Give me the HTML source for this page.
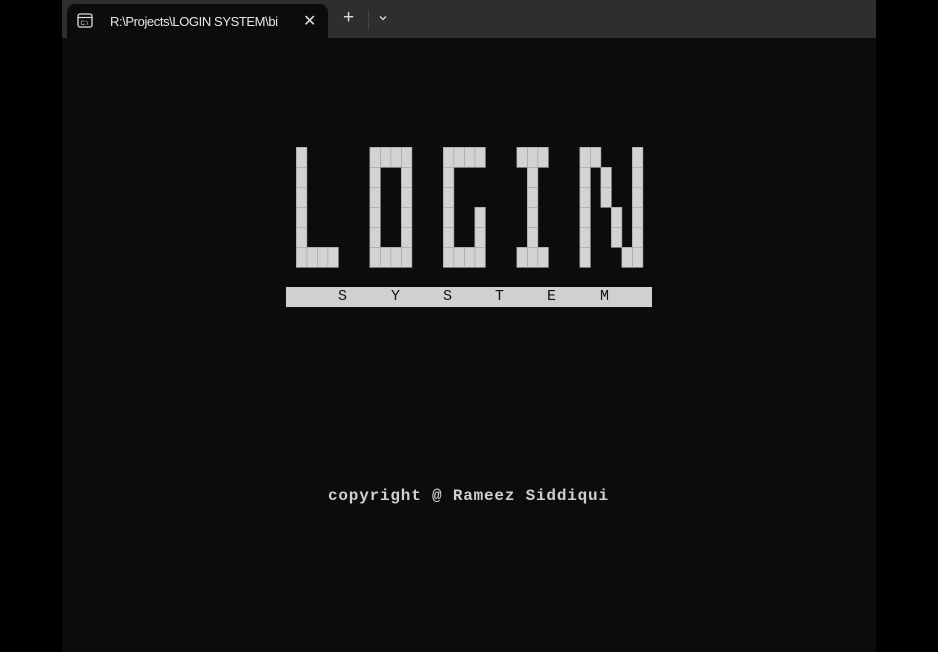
<!DOCTYPE html>
<html><head><meta charset="utf-8"><style>
body{margin:0;width:938px;height:652px;background:#000;position:relative;overflow:hidden;font-family:"Liberation Sans",sans-serif}
.win{position:absolute;left:62px;top:0;width:814px;height:652px;background:#0c0c0c}
.bar{position:absolute;left:0;top:0;width:814px;height:38px;background:#2e2e2e}
.tab{position:absolute;left:5px;top:4px;width:261px;height:34px;background:#0c0c0c;border-radius:8px 8px 0 0}
.title{position:absolute;left:43px;top:10px;color:#e6e6e6;font-size:13px;letter-spacing:-0.4px}
.x{position:absolute;left:236px;top:7px;color:#ddd;font-size:16px}
.plus{position:absolute;left:281px;top:8px;color:#ddd;font-size:19px;line-height:20px}
.sep{position:absolute;left:306px;top:10px;width:1px;height:20px;background:#444}
.chev{position:absolute;left:316px;top:14px}
.sys{position:absolute;left:286px;top:287px;width:366px;height:20px;background:#d0d0d0}
.sys span{position:absolute;top:1px;font-family:"Liberation Mono",monospace;font-size:15px;color:#111}
.copy{position:absolute;left:328px;top:487px;color:#cfcfcf;font-family:"Liberation Mono",monospace;font-size:16px;font-weight:bold;letter-spacing:0.8px;white-space:pre}
</style></head><body>
<div class="win">
<div class="bar">
<div class="tab">
<svg style="position:absolute;left:10px;top:9px" width="16" height="15" viewBox="0 0 16 15"><rect x="1" y="1" width="14" height="13" rx="2" fill="none" stroke="#ddd" stroke-width="1.3"/><line x1="1" y1="4.5" x2="15" y2="4.5" stroke="#ddd" stroke-width="1.2"/><text x="3.5" y="12" font-size="6" fill="#ddd" font-family="Liberation Sans">C:\</text></svg>
<div class="title">R:\Projects\LOGIN SYSTEM\bi</div>
<div class="x">✕</div>
</div>
<div class="plus">+</div>
<div class="sep"></div>
<svg class="chev" width="10" height="8" viewBox="0 0 10 8"><path d="M2 2.5 L5 5.5 L8 2.5" fill="none" stroke="#ddd" stroke-width="1.3"/></svg>
</div>
</div>
<svg style="position:absolute;left:296px;top:147px" width="348" height="121" viewBox="0 0 348 121">
<g fill="#d3d3d3" stroke="#a5a5a5" stroke-width="0.7" id="g"></g>
</svg>
<div class="sys"><span style="left:52px">S</span><span style="left:105px">Y</span><span style="left:157px">S</span><span style="left:209px">T</span><span style="left:261px">E</span><span style="left:314px">M</span></div>
<div class="copy">copyright @ Rameez Siddiqui</div>
<script>
var c=[];function col(x,a,b){for(var r=a;r<=b;r++)c.push([x,r]);}
col(0,0,5);c.push([1,5],[2,5],[3,5]);
col(7,0,5);col(10,0,5);c.push([8,0],[9,0],[8,5],[9,5]);
col(14,0,5);c.push([15,0],[16,0],[17,0],[15,5],[16,5],[17,3],[17,4],[17,5]);
col(22,0,5);c.push([21,0],[23,0],[21,5],[23,5]);
col(27,0,5);col(32,0,5);c.push([28,0],[29,1],[29,2],[30,3],[30,4],[31,5]);
var g=document.getElementById('g'),h='';
c.forEach(function(p){h+='<rect x="'+(p[0]*10.5+0.35)+'" y="'+(p[1]*20+0.35)+'" width="10.5" height="20"/>';});
g.innerHTML=h;
</script>
</body></html>
